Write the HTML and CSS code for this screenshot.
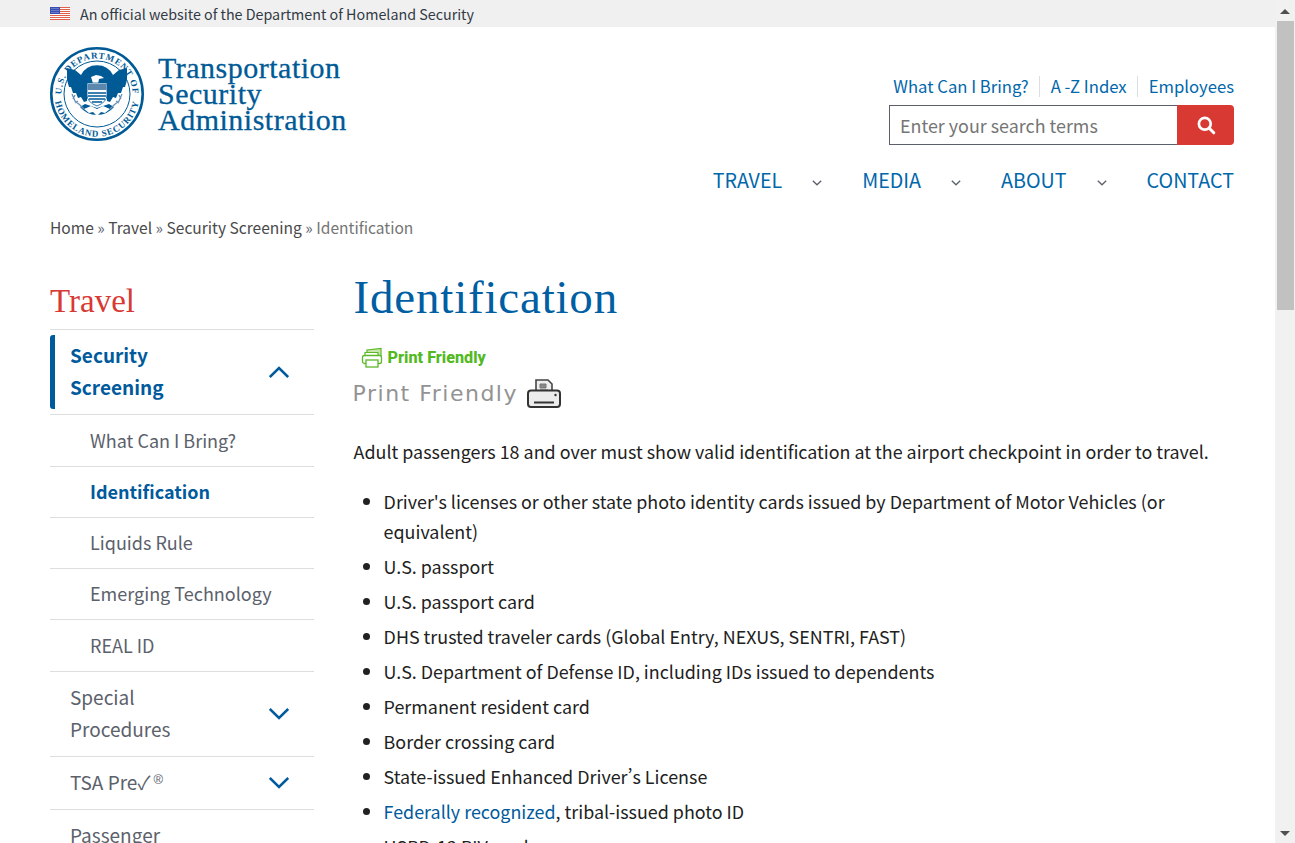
FILE: index.html
```html
<!DOCTYPE html>
<html lang="en">
<head>
<meta charset="utf-8">
<title>Identification | Transportation Security Administration</title>
<link rel="stylesheet" href="styles.css">
</head>
<body>
<div class="viewport">
  <div class="gov-banner">
    <svg class="flag" viewBox="0 0 20 13" width="20" height="13" aria-hidden="true">
      <rect width="20" height="13" fill="#fff"/>
      <path d="M0 .5h20M0 2.500h20M0 4.500h20M0 6.500h20M0 8.500h20M0 10.500h20M0 12.500h20" stroke="#e0604a" stroke-width="1"/>
      <rect width="10" height="7" fill="#3a4db0"/>
      <path d="M1.500 1.500h7M1.500 3.500h7M1.500 5.500h7" stroke="#9aa6e0" stroke-width="1" stroke-dasharray="1 1"/>
    </svg>
    <span>An official website of the Department of Homeland Security</span>
  </div>
  <header class="site-header">
    <a class="brand" href="#">
      <svg class="seal" viewBox="0 0 94 94" width="94" height="94" aria-hidden="true">
        <defs>
          <path id="seal-top" d="M13.600 59.100A35.500 35.500 0 1 1 80.400 59.100"/>
          <path id="seal-bot" d="M6 36A42.500 42.500 0 1 0 88 36"/>
        </defs>
        <circle cx="47" cy="47" r="45.700" fill="#fff" stroke="#005a96" stroke-width="2.600"/>
        <circle cx="47" cy="47" r="33" fill="#fff" stroke="#005a96" stroke-width="1"/>
        <text class="seal-text"><textPath href="#seal-top" startOffset="50%" text-anchor="middle">U.S. DEPARTMENT OF</textPath></text>
        <text class="seal-text"><textPath href="#seal-bot" startOffset="50%" text-anchor="middle">HOMELAND SECURITY</textPath></text>
        <path d="M31 28a18 18 0 0 1 32 0l-3 14H34z" fill="#005a96"/>
        <path d="M17 21l8 2 6 5 4 6 2 9v11l-3 1-3-5-3 1-2-5-3 0-2-6-2 0-2-7zM77 21l-8 2-6 5-4 6-2 9v11l3 1 3-5 3 1 2-5 3 0 2-6 2 0 2-7z" fill="#005a96"/>
        <path d="M30 60a22 22 0 0 0 34 0l-5-3-12 4-12-4z" fill="#005a96"/>
        <path d="M41 30l5-2 5 1 3 2-5 1-1 5h-5l-1-4z" fill="#fff"/>
        <path d="M37 36h20v12q0 7-10 11q-10-4-10-11z" fill="#fff" stroke="#005a96" stroke-width=".8"/>
        <rect x="37.500" y="37" width="19" height="6" fill="#5c88ad"/>
        <path d="M38 46h18M38 49h18M39 52h16M42 55h10" stroke="#005a96" stroke-width="1.300"/>
        <path d="M34 62l7-3 6 3 6-3 7 3-5 4-4-1-4 4-4-4-4 1z" fill="#fff"/>
        <path d="M22 47l3 7 5 4 4 4M25 48l-2 4M28 54l-3 2M72 47l-3 7-5 4-4 4M69 48l2 4M66 54l3 2" stroke="#6b93b5" stroke-width="1.300" fill="none"/>
      </svg>
      <span class="wordmark">Transportation<br>Security<br>Administration</span>
    </a>
    <div class="header-right">
      <nav class="util-links">
        <a href="#">What Can I Bring?</a>
        <a href="#">A -Z Index</a>
        <a href="#">Employees</a>
      </nav>
      <form class="search">
        <input class="search-input" type="text" placeholder="Enter your search terms">
        <button class="search-btn" type="button" aria-label="Search">
          <svg viewBox="0 0 20 20" width="20" height="20" aria-hidden="true"><circle cx="8.800" cy="8.800" r="5.900" fill="none" stroke="#fff" stroke-width="2.700"/><path d="M13.200 13.200l4.600 4.600" stroke="#fff" stroke-width="3" stroke-linecap="round"/></svg>
        </button>
      </form>
    </div>
  </header>
  <nav class="main-nav">
    <a href="#">TRAVEL</a>
    <svg class="nav-caret" viewBox="0 0 10 6" width="10" height="6" aria-hidden="true"><path d="M.8.8L5 4.800 9.200.8" fill="none" stroke="#5b616b" stroke-width="1.300"/></svg>
    <a href="#">MEDIA</a>
    <svg class="nav-caret" viewBox="0 0 10 6" width="10" height="6" aria-hidden="true"><path d="M.8.8L5 4.800 9.200.8" fill="none" stroke="#5b616b" stroke-width="1.300"/></svg>
    <a href="#">ABOUT</a>
    <svg class="nav-caret" viewBox="0 0 10 6" width="10" height="6" aria-hidden="true"><path d="M.8.8L5 4.800 9.200.8" fill="none" stroke="#5b616b" stroke-width="1.300"/></svg>
    <a href="#">CONTACT</a>
  </nav>
  <div class="breadcrumb"><a href="#">Home</a> » <a href="#">Travel</a> » <a href="#">Security Screening</a> » <span class="crumb-current">Identification</span></div>
  <div class="columns">
    <aside class="sidebar">
      <h2 class="side-title">Travel</h2>
      <ul class="side-menu">
        <li class="side-item side-active">
          <a class="side-bar-mark" href="#">Security<br>Screening</a>
          <svg class="chev" viewBox="0 0 20 12" width="20" height="12" aria-hidden="true"><path d="M.8 11L10 2 19.200 11" fill="none" stroke="#005a9c" stroke-width="2.500"/></svg>
        </li>
        <li class="side-sub side-sub-tall"><a href="#">What Can I Bring?</a></li>
        <li class="side-sub side-sub-active"><a href="#">Identification</a></li>
        <li class="side-sub"><a href="#">Liquids Rule</a></li>
        <li class="side-sub"><a href="#">Emerging Technology</a></li>
        <li class="side-sub side-sub-tall"><a href="#">REAL ID</a></li>
        <li class="side-item side-two">
          <a href="#">Special<br>Procedures</a>
          <svg class="chev" viewBox="0 0 20 12" width="20" height="12" aria-hidden="true"><path d="M.8 1L10 10 19.200 1" fill="none" stroke="#005a9c" stroke-width="2.500"/></svg>
        </li>
        <li class="side-item side-one">
          <a href="#">TSA Pre✓<sup class="reg">®</sup></a>
          <svg class="chev" viewBox="0 0 20 12" width="20" height="12" aria-hidden="true"><path d="M.8 1L10 10 19.200 1" fill="none" stroke="#005a9c" stroke-width="2.500"/></svg>
        </li>
        <li class="side-item side-two">
          <a href="#">Passenger<br>Support</a>
        </li>
      </ul>
    </aside>
    <main class="content">
      <h1 class="page-title">Identification</h1>
      <a class="pf-green" href="#">
        <svg viewBox="0 0 22 22" width="22" height="22" aria-hidden="true">
          <path d="M6 5V3l14-1.500V13h-3" fill="#c9e8a8" stroke="#5cb82a" stroke-width="1.200"/>
          <path d="M4 8V5.500h13V9" fill="#fff" stroke="#5cb82a" stroke-width="1.200"/>
          <rect x="1.500" y="8.500" width="19" height="8" rx="2" fill="#fff" stroke="#5cb82a" stroke-width="1.300"/>
          <rect x="5" y="13" width="12" height="7" fill="#fff" stroke="#5cb82a" stroke-width="1.300"/>
        </svg>
        <span>Print Friendly</span>
      </a>
      <a class="pf-gray" href="#">
        <span>Print Friendly</span>
        <svg viewBox="0 0 36 32" width="36" height="32" aria-hidden="true">
          <path d="M10 13V2h12l4 4v7" fill="#eee" stroke="#444" stroke-width="1.600"/>
          <path d="M14 6h6v4h-6zM14 12h8" fill="#888" stroke="#777"/>
          <rect x="2" y="12.500" width="32" height="16.500" rx="3" fill="#ececec" stroke="#333" stroke-width="2"/>
          <path d="M8 24.500h20" stroke="#333" stroke-width="2"/>
          <circle cx="29.500" cy="17" r="1.200" fill="#333"/>
        </svg>
      </a>
      <p class="lead">Adult passengers 18 and over must show valid identification at the airport checkpoint in order to travel.</p>
      <ul class="id-list">
        <li>Driver's licenses or other state photo identity cards issued by Department of Motor Vehicles (or equivalent)</li>
        <li>U.S. passport</li>
        <li>U.S. passport card</li>
        <li>DHS trusted traveler cards (Global Entry, NEXUS, SENTRI, FAST)</li>
        <li>U.S. Department of Defense ID, including IDs issued to dependents</li>
        <li>Permanent resident card</li>
        <li>Border crossing card</li>
        <li>State-issued Enhanced Driver’s License</li>
        <li><a href="#">Federally recognized</a>, tribal-issued photo ID</li>
        <li>HSPD-12 PIV card</li>
      </ul>
    </main>
  </div>
</div>
<div class="scrollbar" aria-hidden="true">
  <span class="arrow-up"></span>
  <span class="thumb"></span>
  <span class="arrow-down"></span>
</div>
</body>
</html>
```
FILE: styles.css
```css
* { box-sizing: border-box; }
html, body { margin: 0; height: 100%; overflow: hidden; }
body {
  display: flex;
  font-family: "Noto Sans CJK SC", "Noto Sans", sans-serif;
  font-variant-east-asian: proportional-width;
  color: #212121;
  background: #fff;
}
a { color: #0067ab; text-decoration: none; }
ul { list-style: none; margin: 0; padding: 0; }

.viewport { flex: 1; min-width: 0; height: 100vh; overflow: hidden; }

.gov-banner {
  height: 27px;
  background: #f0f0f0;
  padding-left: 50px;
  display: flex;
  align-items: center;
  gap: 10px;
  font-size: 14.300px;
  line-height: 27px;
  color: #323a45;
}
.flag { display: block; }

.site-header {
  display: flex;
  justify-content: space-between;
  padding: 20px 41px 0 50px;
  height: 138px;
}
.brand { display: flex; align-items: flex-start; gap: 14px; height: 94px; }
.seal { display: block; flex: none; }
.seal-text { font: 700 9px "Liberation Serif", serif; fill: #005a96; letter-spacing: .9px; }
.wordmark {
  font-family: "Liberation Serif", serif;
  font-size: 30px;
  line-height: 26px;
  color: #005a96;
  padding-top: 8px;
  letter-spacing: .5px;
  -webkit-text-stroke: .3px #005a96;
}
.header-right { display: flex; flex-direction: column; align-items: flex-end; padding-top: 27px; }
.util-links { display: flex; height: 24px; align-items: center; font-size: 16.700px; line-height: 24px; }
.util-links a { padding: 0 10px 0 11px; border-right: 1px solid #dcdee0; height: 21px; line-height: 21px; }
.util-links a:last-child { padding-right: 0; border-right: 0; }
.search { display: flex; margin-top: 7px; width: 345px; height: 40px; }
.search-input {
  flex: 1;
  min-width: 0;
  border: 1px solid #5b616b;
  border-right: 0;
  padding: 0 10px;
  font: 17.900px "Noto Sans CJK SC", sans-serif;
  outline: 0;
  background: #fff;
}
.search-input::placeholder { color: #757575; opacity: 1; }
.search-btn {
  width: 57px;
  border: 0;
  padding: 0;
  background: #d83933;
  border-radius: 0 4px 4px 0;
  display: flex;
  align-items: center;
  justify-content: center;
}

.main-nav {
  display: flex;
  justify-content: flex-end;
  align-items: center;
  padding-right: 41px;
  height: 30px;
  font-size: 19.700px;
  line-height: 30px;
}
.nav-caret { margin: 6px 40px 0 30px; }

.breadcrumb {
  padding-left: 50px;
  margin-top: 19px;
  font-size: 15.560px;
  line-height: 26px;
  color: #5b616b;
}
.breadcrumb a { color: #4a4a4a; }
.crumb-current { color: #757575; }

.columns { display: flex; padding: 0 41px 0 50px; margin-top: 30px; gap: 39.600px; }
.sidebar { width: 264px; flex: none; }
.side-title {
  margin: 0;
  height: 60px;
  font: 400 33px/42px "Liberation Serif", serif;
  color: #d83933;
  border-bottom: 1px solid #dcdee0;
  padding-top: 10px;
}
.side-item, .side-sub { border-bottom: 1px solid #dcdee0; position: relative; }
.side-item { display: flex; align-items: center; justify-content: space-between; font-size: 19px; line-height: 32px; padding: 0 25px 0 20px; }
.side-item a { color: #5b616b; }
.side-active { height: 85px; padding-left: 0; }
.side-active a { color: #005a9c; font-weight: 700; }
.side-bar-mark { display: block; height: 74px; margin-top: -1px; border-left: 5px solid #005a9c; border-radius: 3px; padding: 4px 0 0 15px; }
.side-two { height: 85px; padding-bottom: 2px; }
.side-one { height: 53px; padding-bottom: 2px; }
.side-two .chev, .side-one .chev { margin-top: 2px; }
.reg { font: 13px/0 "Liberation Sans", sans-serif; vertical-align: 6px; margin-left: 3px; }
.side-sub { height: 51px; line-height: 48px; padding-left: 40px; font-size: 18px; }
.side-sub-tall { height: 52px; line-height: 50px; }
.side-sub a { color: #5b616b; }
.side-sub-active a { color: #005a9c; font-weight: 700; }

.content { flex: 1; min-width: 0; }
.page-title {
  margin: 0;
  font: 400 47px/54px "Liberation Serif", serif;
  color: #005ea2;
  letter-spacing: .8px;
}
.pf-green { display: flex; align-items: center; gap: 5px; height: 24px; margin: 22px 0 0 7px; font: 800 16.200px/24px Roboto, sans-serif; color: #52b91f; }
.pf-gray { display: flex; align-items: center; gap: 8px; height: 34px; margin: 7px 0 0 -1px; font: 400 22px/34px "DejaVu Sans", sans-serif; color: #939393; letter-spacing: 1.500px; }
.lead { margin: 24px 0 0; font-size: 17.900px; line-height: 32px; }
.id-list { margin-top: 19px; padding-left: 30px; list-style: disc; font-size: 17.900px; line-height: 30px; }
.id-list li { margin-bottom: 5px; }
.id-list a { color: #005a9c; }

.scrollbar { width: 20px; flex: none; height: 100vh; background: #f1f1f1; display: flex; flex-direction: column; align-items: center; padding: 9px 0 7px; }
.arrow-up { width: 0; height: 0; border: 5px solid transparent; border-top: 0; border-bottom-color: #505050; }
.thumb { width: 17px; height: 289px; margin-top: 7px; background: #c1c1c1; }
.arrow-down { width: 0; height: 0; margin-top: auto; border: 5px solid transparent; border-bottom: 0; border-top-color: #505050; }
```
